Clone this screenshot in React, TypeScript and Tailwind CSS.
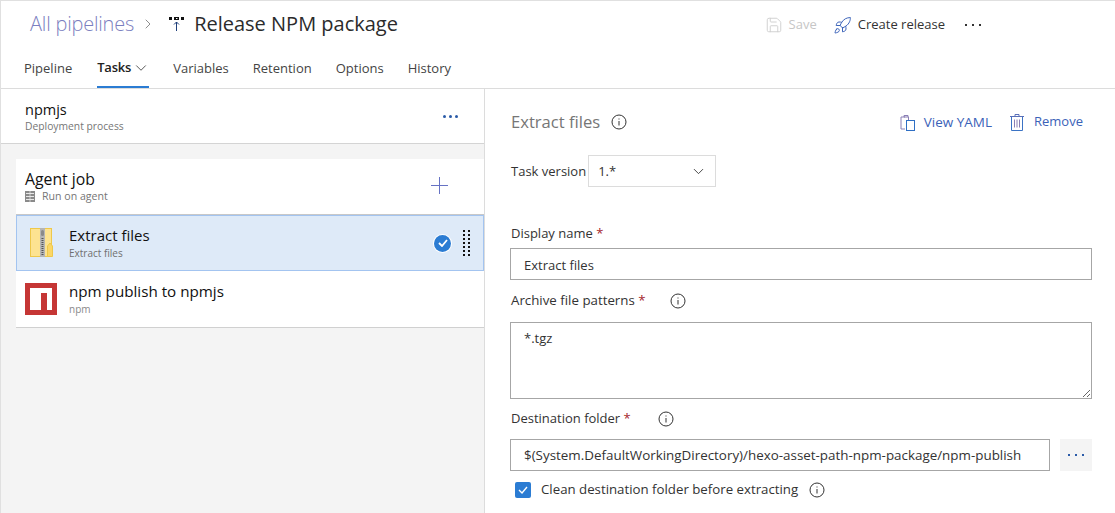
import React from "react";
import { ChevronDown, ChevronRight, Rocket, Save } from "lucide-react";

const InfoIcon = ({ className = "" }: { className?: string }) => (
  <svg width="16" height="16" viewBox="0 0 16 16" fill="none" className={`shrink-0 ${className}`}>
    <circle cx="8" cy="8" r="7" stroke="#333" strokeWidth="1" />
    <rect x="7.5" y="7" width="1" height="4.5" fill="#333" />
    <rect x="7.5" y="4.5" width="1" height="1" fill="#333" />
  </svg>
);

const Req = () => <span className="text-[#a4262c]"> *</span>;

const Dots = ({ color, size = "sm" }: { color: string; size?: "sm" | "md" }) => (
  <div className={`flex ${size === "md" ? "gap-[3px]" : "gap-[5px]"}`}>
    {[0, 1, 2].map((i) => (
      <span
        key={i}
        className={size === "md" ? "w-[3px] h-[3px] rounded-full" : "w-[2px] h-[2px]"}
        style={{ backgroundColor: color }}
      />
    ))}
  </div>
);

const PipelineIcon = () => (
  <svg width="16" height="16" viewBox="0 0 16 16" className="shrink-0">
    <rect x="0" y="1" width="3" height="3" fill="#111" />
    <rect x="5" y="1" width="5" height="3" fill="#111" />
    <rect x="7" y="2" width="1.5" height="1" fill="#fff" />
    <rect x="12" y="1" width="3" height="3" fill="#111" />
    <path d="M7.5 15V6M5 8.5L7.5 6L10 8.5" stroke="#1f3f7a" strokeWidth="1" fill="none" />
  </svg>
);

const ZipIcon = () => (
  <svg width="24" height="30" viewBox="0 0 24 30" className="shrink-0">
    <rect x="0.5" y="0.5" width="21" height="28" fill="#fde391" stroke="#eec84a" />
    <path d="M17.5 28.5V18l2.5-3 2.5 3v10.5z" fill="#fbd667" stroke="#eec84a" />
    <rect x="10" y="0" width="5" height="29" fill="#b5b5b5" />
    <rect x="11" y="2" width="3" height="6" rx="1.5" fill="#8a8a8a" />
    <path d="M12.5 10v18" stroke="#555" strokeWidth="2" strokeDasharray="1 1" />
  </svg>
);

const NpmIcon = () => (
  <svg width="32" height="32" viewBox="0 0 32 32" className="shrink-0">
    <rect width="32" height="32" fill="#c53635" />
    <path d="M5 5h22v22h-5V10h-6v17H5z" fill="#fff" />
  </svg>
);

const AgentIcon = () => (
  <svg width="10" height="11" viewBox="0 0 10 11" className="shrink-0">
    <path d="M0 0h10v11H0z" fill="#8a8a8a" />
    <path d="M1 2.5h8M1 5.5h8M1 8.5h8" stroke="#e8e8e8" strokeWidth="1" />
    <path d="M5 0v11" stroke="#e8e8e8" strokeWidth="0.7" />
  </svg>
);

const CopyIcon = () => (
  <svg width="16" height="17" viewBox="0 0 16 17" fill="none" className="shrink-0">
    <path d="M5 3H1v12h4" stroke="#8a7fb5" />
    <rect x="6.5" y="6.5" width="8" height="10" stroke="#2f6fc4" />
    <path d="M4 3V1.5h4V3M4 3h4.5v3" stroke="#8a7fb5" />
  </svg>
);

const TrashIcon = () => (
  <svg width="14" height="17" viewBox="0 0 14 17" fill="none" className="shrink-0">
    <path d="M0 2.5h14M5 2.5V.5h4v2" stroke="#5a6fb8" />
    <path d="M1.5 3v13.5h11V3" stroke="#3b73c4" />
    <path d="M4.5 5.5v8M7 5.5v8M9.5 5.5v8" stroke="#8a7fb5" />
  </svg>
);

const PlusIcon = () => (
  <svg width="17" height="17" viewBox="0 0 17 17" fill="none" className="shrink-0 mb-[2px]">
    <path d="M8.5 0v17M0 8.5h17" stroke="#6672c4" strokeWidth="1" />
  </svg>
);

const Gripper = () => (
  <div className="grid grid-cols-2 gap-x-[3px] gap-y-[2px]">
    {Array.from({ length: 14 }).map((_, i) => (
      <span key={i} className="w-[2px] h-[2px] bg-[#111]" />
    ))}
  </div>
);

const tabs = ["Variables", "Retention", "Options", "History"];

export default function App() {
  return (
    <div className="w-[1115px] h-[513px] overflow-hidden bg-white border-t border-l border-[#e0e0e0] flex flex-col font-['Open_Sans',sans-serif] text-[#333] text-[13px]">
      <header className="h-[88px] shrink-0 border-b border-[#dcdcdc] flex flex-col">
        <div className="flex items-center h-[46px] pl-[29px] pr-[134px]">
          <span className="text-[#7b7fc0] text-[20px] tracking-[-0.2px] font-light">All pipelines</span>
          <ChevronRight size={16} strokeWidth={1} className="text-[#555] ml-[6px] mr-[13px]" />
          <PipelineIcon />
          <span className="ml-[9px] text-[20px] text-[#2b2b2b]">Release NPM package</span>
          <div className="ml-auto flex items-center pt-[2px]">
            <Save size={18} strokeWidth={1.25} className="text-[#cfcfcf]" />
            <span className="ml-[6px] text-[#c6c6c6]">Save</span>
            <Rocket size={19} strokeWidth={1.25} className="text-[#3b62b8] ml-[16px]" />
            <span className="ml-[6px]">Create release</span>
            <div className="ml-[20px]">
              <Dots color="#333" />
            </div>
          </div>
        </div>
        <nav className="flex items-stretch gap-[24px] pl-[23px] pt-[2px] h-[41px] text-[#444]">
          <span className="flex items-center">Pipeline</span>
          <span className="ml-[1px] flex items-center gap-[1px] border-b-2 border-[#2b7cd3] text-[#222] font-semibold tracking-[-0.2px] w-[52px] whitespace-nowrap">
            Tasks <ChevronDown size={18} strokeWidth={1} className="shrink-0" />
          </span>
          {tabs.map((t) => (
            <span key={t} className="flex items-center">{t}</span>
          ))}
        </nav>
      </header>

      <main className="flex flex-1 min-h-0">
        <aside className="w-[484px] shrink-0 bg-[#f4f4f4] border-r border-[#dcdcdc] flex flex-col">
          <div className="h-[55px] shrink-0 bg-white border-b border-[#d4d4d4] flex items-center justify-between pl-[24px] pr-[26px]">
            <div className="pt-[2px]">
              <div className="text-[14.5px] leading-[18px] text-[#111]">npmjs</div>
              <div className="text-[10.3px] leading-[14px] text-[#767676]">Deployment process</div>
            </div>
            <Dots color="#2a5ba8" size="md" />
          </div>

          <div className="mt-[15px] ml-[15px] flex flex-col">
            <div className="h-[56px] bg-white flex items-center justify-between pl-[9px] pr-[36px] border-b border-[#c8c8c8]">
              <div>
                <div className="text-[15.8px] leading-[18px] mb-[2px] text-[#111]">Agent job</div>
                <div className="flex items-center gap-[7px] text-[10.6px] leading-[13px] text-[#767676]">
                  <AgentIcon /> Run on agent
                </div>
              </div>
              <PlusIcon />
            </div>
            <div className="h-[56px] bg-[#deeaf8] border border-[#a3c4f0] flex items-center pl-[13px] pr-[13px]">
              <ZipIcon />
              <div className="ml-[15px]">
                <div className="text-[15px] leading-[18px] mb-[2px] text-[#111]">Extract files</div>
                <div className="text-[10px] leading-[14px] text-[#6f6f6f]">Extract files</div>
              </div>
              <div className="ml-auto mr-[12px] w-[17px] h-[17px] rounded-full bg-[#2b7cd3] ring-1 ring-white flex items-center justify-center">
                <svg width="10" height="8" viewBox="0 0 10 8" fill="none">
                  <path d="M1 4l3 3 5-6" stroke="#fff" strokeWidth="1.8" />
                </svg>
              </div>
              <Gripper />
            </div>
            <div className="h-[57px] bg-white border-b border-[#d0d0d0] flex items-center pl-[9px]">
              <NpmIcon />
              <div className="ml-[12px]">
                <div className="text-[15.2px] leading-[18px] mb-[2px] text-[#111]">npm publish to npmjs</div>
                <div className="text-[10px] leading-[14px] text-[#8a8a8a]">npm</div>
              </div>
            </div>
          </div>
        </aside>

        <section className="flex-1 pl-[25px] pr-[23px]">
          <div className="flex items-center h-[24px] mt-[21px]">
            <span className="pl-[1px] text-[16.6px] text-[#767676]">Extract files</span>
            <InfoIcon className="ml-[11px]" />
            <div className="ml-auto flex items-center text-[#3b62b8] pr-[9px]">
              <CopyIcon />
              <span className="ml-[8px] text-[13.5px]">View YAML</span>
              <div className="ml-[18px]">
                <TrashIcon />
              </div>
              <span className="ml-[10px]">Remove</span>
            </div>
          </div>

          <div className="flex items-center mt-[21px]">
            <span className="pl-[1px] pt-[1px]">Task version</span>
            <div className="ml-[2px] w-[128px] h-[32px] border border-[#dcdcdc] flex items-center justify-between pl-[9px] pr-[8px]">
              <span className="text-[13px] pt-[2px]">1.*</span>
              <ChevronDown size={17} strokeWidth={1.25} />
            </div>
          </div>

          <div className="pl-[1px] mt-[37px] leading-[18px]">Display name<Req /></div>
          <div className="mt-[6px] h-[32px] border border-[#a6a6a6] flex items-center pl-[13px] pt-[3px]">Extract files</div>

          <div className="flex items-center mt-[12px] h-[18px] pl-[1px]">
            <span className="text-[13.3px]">Archive file patterns<Req /></span>
            <InfoIcon className="ml-[24px]" />
          </div>
          <textarea
            readOnly
            value="*.tgz"
            className="block mt-[12px] w-full h-[77px] border border-[#a6a6a6] pl-[13px] pt-[6px] outline-none"
          />

          <div className="flex items-center mt-[11px] h-[18px] pl-[1px]">
            <span>Destination folder<Req /></span>
            <InfoIcon className="ml-[27px]" />
          </div>
          <div className="flex mt-[11px] gap-[10px]">
            <div className="flex-1 h-[32px] border border-[#a6a6a6] flex items-center pl-[13px] pt-[1px] whitespace-nowrap overflow-hidden text-[13.4px]">
              $(System.DefaultWorkingDirectory)/hexo-asset-path-npm-package/npm-publish
            </div>
            <div className="w-[32px] h-[32px] bg-[#f4f4f4] flex items-center justify-center">
              <Dots color="#2a5ba8" />
            </div>
          </div>
          <div className="flex items-center mt-[9px] pl-[5px]">
            <div className="w-[16px] h-[16px] rounded-[2px] bg-[#2b7cd3] flex items-center justify-center">
              <svg width="10" height="8" viewBox="0 0 10 8" fill="none">
                <path d="M1 4l3 3 5-6" stroke="#fff" strokeWidth="1.4" />
              </svg>
            </div>
            <span className="ml-[10px] text-[13.25px]">Clean destination folder before extracting</span>
            <InfoIcon className="ml-[11px]" />
          </div>
        </section>
      </main>
    </div>
  );
}
